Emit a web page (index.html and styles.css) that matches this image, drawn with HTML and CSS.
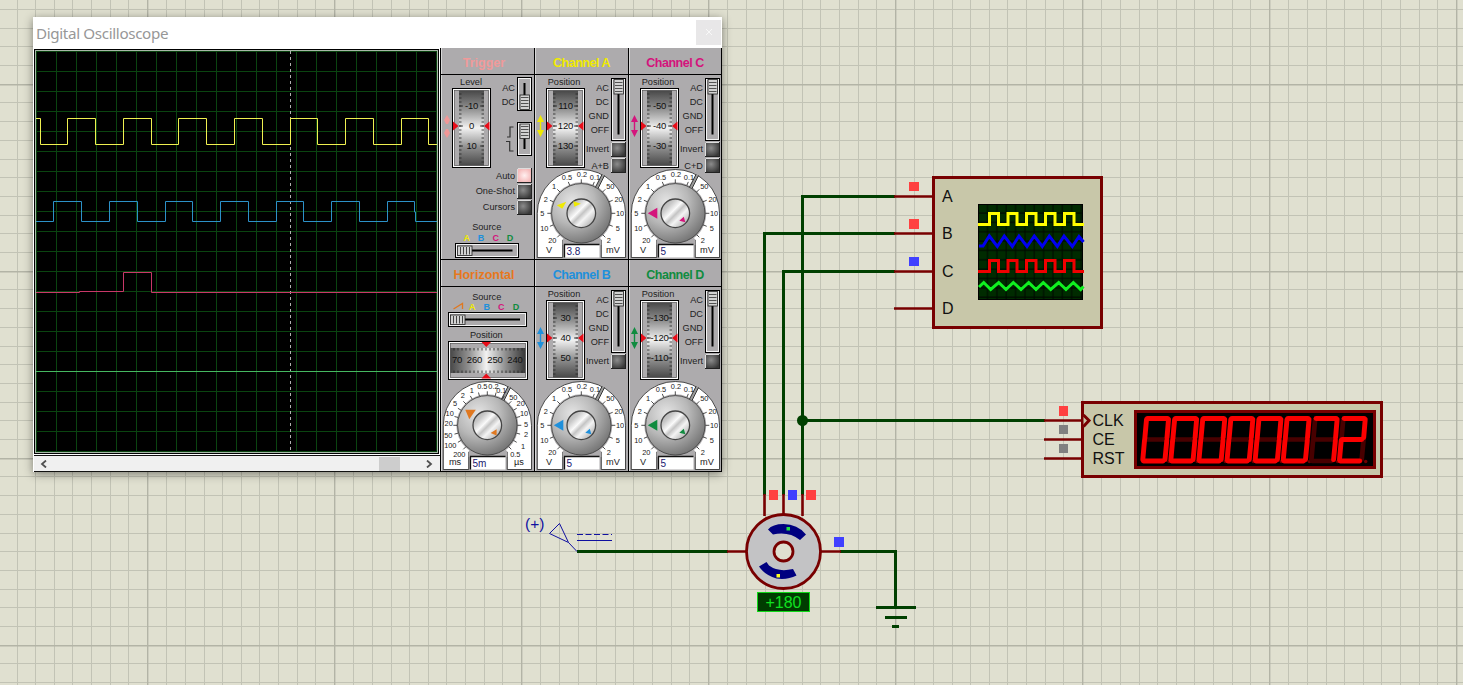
FILE: index.html
```html
<!DOCTYPE html>
<html lang="en">
<head>
<meta charset="utf-8">
<title>Digital Oscilloscope</title>
<link rel="stylesheet" href="styles.css">
</head>
<body>
<main class="workspace">
  <svg class="schematic" viewBox="0 0 1463 685" width="1463" height="685">
    <defs>
      <pattern id="sheet" x="147" y="84" width="187" height="187" patternUnits="userSpaceOnUse">
        <path class="grid-minor" d="M19.5 0V187M38.5 0V187M57.5 0V187M75.5 0V187M94.5 0V187M112.5 0V187M131.5 0V187M150.5 0V187M168.5 0V187M0 18.5H187M0 37.5H187M0 56.5H187M0 75.5H187M0 93.5H187M0 112.5H187M0 131.5H187M0 149.5H187M0 168.5H187"/>
        <path class="grid-major" d="M.6 0V187M0 .6H187"/>
      </pattern>
      <pattern id="mini" x="979" y="204.500" width="9.35" height="9.35" patternUnits="userSpaceOnUse">
        <rect width="9.35" height="9.35" fill="#002b00"/><path d="M8.500 0V9.35M0 8.500H9.35" stroke="#000800"/>
      </pattern>
    </defs>
    <rect width="1463" height="685" fill="url(#sheet)"/>

    <g class="wire">
      <path d="M895 196.500H802.500V495"/><path d="M895 233.500H764.500V495"/><path d="M895 271.500H783.500V495"/>
      <path d="M802 420.500H1045"/><path d="M577 551.500H728"/><path d="M840 551.500H895.500V607"/>
      <path d="M876 607.500H916M885 617.500H907M892 626.500H899"/>
    </g>
    <circle cx="802.500" cy="420.500" r="5.500" fill="#004000"/>

    <g class="pin">
      <path d="M894 196.500H933M894 233.500H933M894 271.500H933M894 308.500H933"/>
      <path d="M1044 420.500H1082M1044 439.500H1082M1044 458.500H1082"/>
      <path d="M764.500 494V516M783.500 494V514M802.500 494V516M727 551.500H746M821 551.500H841"/>
    </g>

    <g class="part">
      <rect x="933.500" y="177.500" width="168" height="150"/>
      <rect x="1082.500" y="402.500" width="299" height="74"/>
      <path d="M1083.500 415L1089 420.500L1083.500 426.500" stroke-width="2"/>
    </g>
    <g class="pin-label">
      <text x="942" y="202">A</text><text x="942" y="239">B</text><text x="942" y="277">C</text><text x="942" y="314">D</text>
      <text x="1092.500" y="426">CLK</text><text x="1092.500" y="445">CE</text><text x="1092.500" y="464">RST</text>
    </g>

    <rect x="978.500" y="204.500" width="104" height="95" fill="url(#mini)" stroke="#000"/>
    <g class="trace-icon">
      <path stroke="#ffff00" d="M978 224.500H989.500V213.500H998.500V224.500H1008V213.500H1017V224.500H1026.500V213.500H1036V224.500H1045.500V213.500H1055V224.500H1064.500V213.500H1074V224.500H1084"/>
      <path stroke="#0000f0" d="M979 246H983L989.300 236L997.300 246.500L1004.300 236L1012.300 246.500L1019 236L1027 246.500L1034.300 236L1042.300 246.500L1049.300 236L1057.300 246.500L1064 236L1072.300 246.500L1079 236.500L1083.500 242"/>
      <path stroke="#f00000" d="M978 271.500H989.500V260.500H998.500V271.500H1008V260.500H1017V271.500H1026.500V260.500H1036V271.500H1045.500V260.500H1055V271.500H1064.500V260.500H1074V271.500H1084"/>
      <path stroke="#10f020" stroke-width="2.500" d="M979 287L983.700 282.500L990.700 289.500L998.700 282.500L1006 289.500L1013.300 282.500L1021 289.500L1028.700 282.500L1036 289.500L1043.300 282.500L1050.700 289.500L1058.700 282.500L1066 289.500L1073.300 282.500L1080.700 289.500L1083.500 286.500"/>
    </g>

    <rect x="1135.500" y="411.500" width="239" height="56" fill="#000" stroke="#780000" stroke-width="3"/>
    <g id="digits"></g>

    <g fill="#ff4040">
      <rect x="909" y="182" width="10" height="9"/><rect x="909" y="219" width="10" height="10"/>
      <rect x="1059" y="406" width="9" height="10"/><rect x="769" y="490" width="9" height="10"/><rect x="806" y="490" width="10" height="10"/>
    </g>
    <g fill="#4040ff">
      <rect x="909" y="257" width="10" height="9"/><rect x="788" y="490" width="9" height="10"/><rect x="834" y="537" width="10" height="10"/>
    </g>
    <g fill="#808080"><rect x="1059" y="425" width="9" height="9"/><rect x="1059" y="444" width="9" height="9"/></g>

    <g transform="translate(783.500 551.500)">
      <circle r="37" fill="#c3c3c5" stroke="#780000" stroke-width="2.800"/>
      <circle r="9.500" fill="#e0e0d0" stroke="#780000" stroke-width="2.800"/>
      <path class="magnet" d="M-15.500-22Q-11-27.500 0-27.500Q14-27.500 22.500-17L16.500-11.500Q5-20.500-10.500-17Z"/>
      <path class="magnet" d="M-24.500 15L-17 10.500L-14.500 14Q-5 21 9.500 17.500L13 24Q4 28.500-7 27Q-19 23.500-24.500 15Z"/>
      <rect x="3" y="-24.500" width="3.500" height="3.500" fill="#20e040"/><rect x="-7" y="22.500" width="3.500" height="3.500" fill="#ffff20"/>
    </g>
    <rect x="757.500" y="592.500" width="52" height="19" fill="#003c00" stroke="#10d818"/>
    <text class="angle" x="783.500" y="608" text-anchor="middle">+180</text>

    <g class="probe">
      <path d="M559.500 523.500L549.500 533.500L568.500 542.500ZM568.500 542.500L577 551.500M577 540.500H612"/>
      <path d="M577 534.500H612" stroke-dasharray="6 2.500"/>
      <text x="525" y="529">(+)</text>
    </g>
  </svg>

  <section class="window">
    <header class="titlebar"><h1>Digital Oscilloscope</h1><button class="close" aria-label="Close"><svg width="8" height="8"><path d="M1 1L7 7M7 1L1 7" stroke="#f8f8f8"/></svg></button></header>
    <div class="window-body">
      <div class="display">
        <svg class="screen" viewBox="34 48 406 407" width="406" height="407">
          <defs><pattern id="div" x="36" y="51" width="20" height="20" patternUnits="userSpaceOnUse"><path d="M.5 0V20M0 .5H20" stroke="#0a4410"/></pattern></defs>
          <rect x="34" y="48" width="406" height="407" fill="#fff"/>
          <rect x="34" y="49" width="405" height="405" fill="#000"/>
          <rect x="35.500" y="50.500" width="402" height="402" fill="#000" stroke="#a9b8a9"/>
          <rect x="36" y="51" width="401" height="401" fill="url(#div)"/>
          <path d="M290.500 51V452" stroke="#b0b0b0" stroke-dasharray="3 3"/>
          <g fill="none">
            <path stroke="#f0f050" d="M36 118.500H40.500V144.500H67.500V118.500H95.500V144.500H123.500V118.500H151.500V144.500H178.500V118.500H206.500V144.500H234.500V118.500H262.500V144.500H290.500V118.500H317.500V144.500H345.500V118.500H373.500V144.500H401.500V118.500H428.500V144.500H437"/>
            <path stroke="#2c91c8" d="M36 221.500H53.500V201.500H81.500V221.500H109.500V201.500H137.500V221.500H165.500V201.500H192.500V221.500H220.500V201.500H248.500V221.500H276.500V201.500H303.500V221.500H331.500V201.500H359.500V221.500H387.500V201.500H414.500V212H415.500V221.500H437"/>
            <path stroke="#c83868" d="M36 292.500H79.500V291.500H123.500V272.500H151.500V292.500H437"/>
            <path stroke="#45b860" d="M36 371.500H437"/>
          </g>
        </svg>
        <div class="scrollbar">
          <svg width="8" height="8" viewBox="0 0 8 8"><path d="M6 .5L2 4L6 7.500"/></svg>
          <span class="thumb"></span>
          <svg width="8" height="8" viewBox="0 0 8 8"><path d="M2 .5L6 4L2 7.500"/></svg>
        </div>
      </div>
      <div class="panels" id="panels"></div>
    </div>
  </section>
</main>
<script src="panels.js"></script>
</body>
</html>
```

FILE: styles.css
```css
* { box-sizing: border-box; }
body { margin: 0; font-family: "Liberation Sans", Arial, sans-serif; background: #e0e0d0; overflow: hidden; }
.workspace { position: relative; width: 1463px; height: 685px; background: #e0e0d0; }
.schematic { display: block; }
.grid-minor { stroke: #c2c3b5; stroke-width: 1; fill: none; }
.grid-major { stroke: #b3b4a6; stroke-width: 1.6; fill: none; }
.wire path { stroke: #004000; stroke-width: 3; fill: none; }
.pin path { stroke: #780000; stroke-width: 2.6; }
.part * { fill: #c8c7a9; stroke: #780000; stroke-width: 3; }
.pin-label text { font-size: 16px; fill: #111; }
.trace-icon path { fill: none; stroke-width: 3; }
.magnet { fill: #000080; }
.angle { font-size: 16px; fill: #10e020; }
.probe path { fill: none; stroke: #1010a0; }
.probe text { font-size: 15.500px; fill: #1010a0; }
.seg { stroke: #fb0000; stroke-width: 4.900; stroke-linecap: round; }
.seg-off { stroke: #480000; stroke-width: 4.700; stroke-linecap: round; }

.window { position: absolute; left: 33px; top: 17px; width: 689px; height: 455px; background: #fff; box-shadow: 0 2px 9px rgba(0, 0, 0, .45); display: flex; flex-direction: column; }
.titlebar { height: 31px; flex: none; display: flex; align-items: center; justify-content: space-between; padding: 0 1px 2px 3px; }
.titlebar h1 { margin: 0; padding-top: 2px; font: 400 15.200px "Noto Sans", "Open Sans", sans-serif; letter-spacing: -.35px; color: #979797; white-space: nowrap; }
.close { width: 25px; height: 25px; margin-top: 1px; border: 0; padding: 0; background: #e8e7e8; display: grid; place-items: center; }
.window-body { display: flex; flex: 1; padding-left: 1px; }
.display { width: 406px; display: flex; flex-direction: column; }
.screen { display: block; }
.scrollbar { height: 17px; background: #f0f0f0; border-top: 1px solid #111; border-bottom: 1px solid #111; display: flex; align-items: center; padding: 0 7px 0 6px; }
.scrollbar path { fill: none; stroke: #505050; stroke-width: 1.8; }
.thumb { width: 21px; height: 14px; background: #cdcdcd; margin-left: auto; margin-right: 25px; }
.panels { display: grid; grid-template-columns: 94px 94px 94px; grid-template-rows: 212px 212px; }
.panel { background: #adabad; border-left: 1px solid #000; border-bottom: 1px solid #000; box-shadow: inset 1px 0 #d8d8d8; display: flex; flex-direction: column; }
.panel:nth-child(3n) { border-right: 1px solid #000; }
.panel h2 { height: 27px; flex: none; margin: 0; border-bottom: 1px solid #000; font-size: 12.500px; line-height: 30px; letter-spacing: -.5px; text-align: center; white-space: nowrap; }
.panel:nth-child(3n + 1) h2 { padding-right: 7px; letter-spacing: 0; }
.panel > svg { display: block; margin-left: -1px; }
.label { font-size: 9.200px; fill: #222; }
.scale { font-size: 7.400px; fill: #222; }
.value { font-size: 9.500px; fill: #111; letter-spacing: -.2px; }
.letter { font-size: 9px; font-weight: 700; }
.lcd { font-size: 10px; fill: #202070; }
```

FILE: panels.js
```javascript
const INK = { A: '#f0ea00', B: '#1e90dc', C: '#d4147c', D: '#108c40' };
const txt = (x, y, s, cls = 'label', anchor = 'end', extra = '') =>
  `<text class="${cls}" x="${x}" y="${y}" text-anchor="${anchor}" ${extra}>${s}</text>`;
const box = (x, y, w, h) => {
  const l = Math.floor(x) + .5, t = Math.floor(y) + .5, r = Math.round(w) - 1, b = Math.round(h) - 1;
  return `<rect x="${l}" y="${t}" width="${r}" height="${b}" fill="#adabad" stroke="#000"/>` +
    `<rect x="${l + 1}" y="${t + 1}" width="${r - 2}" height="${b - 2}" fill="none" stroke="#f4f4f4"/>`;
};
const gauge = (x, y, w, h) =>
  `<rect x="${x + .5}" y="${y + .5}" width="${w}" height="${h}" fill="#adabad" stroke="#000"/>` +
  `<rect x="${x + 1.5}" y="${y + 1.5}" width="${w - 2}" height="${h - 2}" fill="none" stroke="#fff"/>` +
  `<rect x="${x + 2.5}" y="${y + 2.5}" width="${w - 4}" height="${h - 4}" fill="none" stroke="#444" stroke-width=".5"/>`;
const button = (y, fill = 'url(#btn)') =>
  `<rect x="77.500" y="${y + .5}" width="14" height="14" fill="${fill}" stroke="#222"/>` +
  `<path d="M77.500 ${y + 14}V${y + .5}H91" fill="none" stroke="#ddd"/>`;

function knobV(y) {
  let s = `<rect x="80" y="${y}" width="9.500" height="14.500" fill="#d2d2d2" stroke="#222" stroke-width=".8"/>`;
  for (let i = 2.5; i < 14; i += 3) s += `<path d="M81 ${Math.floor(y + i) + .5}H88.500" stroke="#444" stroke-width=".9"/>`;
  return s;
}
function knobH(x, y) {
  let s = `<rect x="${x}" y="${y}" width="14.500" height="9.500" fill="#d2d2d2" stroke="#222" stroke-width=".8"/>`;
  for (let i = 3; i < 13; i += 3) s += `<path d="M${x + i} ${y + 1}V${y + 8.5}" stroke="#333" stroke-width=".9"/>`;
  return s;
}
function barrel(values) {
  let s = gauge(12, 40, 38, 79) + '<rect x="19" y="42.500" width="25" height="75" fill="url(#drum)"/>';
  for (let y = 46; y < 116; y += 4) s += `<path d="M19 ${y}h2.500M44 ${y}h-2.500" stroke="#222" stroke-width=".8"/>`;
  values.forEach((v, i) => {
    const y = 58 + i * 20;
    s += `<path d="M19 ${y}h4M44 ${y}h-4" stroke="#222" stroke-width=".8"/>` + txt(31.500, y + 3.400, v, 'value', 'middle');
  });
  return s + '<path d="M13 73.500L18.500 78L13 82.500ZM49.500 73.500L44 78L49.500 82.500Z" fill="#e80c18"/>';
}
const arrows = c => `<path d="M6.500 67L10 74H7.200V82H10L6.500 89L3 82H5.800V74H3Z" fill="${c}"/>`;

function dial(labels, units, lcd, pointer, inner, color, step) {
  const cx = 47.3, cy = 165.3;
  let s = `<path d="M3.300 209.500V165.300A44 43.700 0 0 1 91.500 165.300V209.500H67.300V192H28.700V209.500Z" fill="#fff" stroke="#222" stroke-width=".8"/>`;
  s += `<circle cx="${cx}" cy="${cy}" r="31" fill="#adabad"/>`;
  s += '<path d="M28.700 192L32 185H63L67.300 192V197H28.700Z" fill="#adabad"/>';
  s += '<path d="M68 126.500L70.500 127.500L63.500 141L61 140Z" fill="#999"/><path d="M68 126.500L61 140M70.500 127.500L63.500 141.500" stroke="#222" stroke-width=".9"/>';
  for (let i = 0; i < step; i++) {
    const a = (-225 + i * 270 / (step - 1)) * Math.PI / 180, c = Math.cos(a), n = Math.sin(a);
    s += `<path d="M${(cx + 30 * c).toFixed(1)} ${(cy + 30 * n).toFixed(1)}L${(cx + 34 * c).toFixed(1)} ${(cy + 34 * n).toFixed(1)}" stroke="#222" stroke-width=".8"/>`;
  }
  labels.forEach(([x, y, t]) => { s += txt(x, y + 2.7, t, 'scale', 'middle'); });
  s += txt(15, 205, units[0], 'label', 'middle') + txt(79, 205, units[1], 'label', 'middle');
  s += `<circle cx="${cx}" cy="${cy}" r="29.700" fill="url(#knob)" stroke="#444" stroke-width=".9"/>`;
  s += `<circle cx="${cx}" cy="${cy}" r="14.300" fill="url(#cap)" stroke="#444" stroke-width="1.300"/>`;
  s += `<g transform="translate(${cx} ${cy})" fill="${color}"><path d="${pointer}"/><path d="${inner}"/></g>`;
  s += '<rect x="30.500" y="196.500" width="35" height="13" fill="#fff"/><path d="M30.500 209.500V196.500H65.500" fill="none" stroke="#111" stroke-width="1.300"/>';
  return s + txt(32.500, 206.500, lcd, 'lcd', 'start');
}

const VOLT = [[33, 129.3, '0.5'], [48, 126.3, '0.2'], [61, 129, '0.1'], [76.3, 138.3, '50'], [84.5, 151.3, '20'],
  [86, 165.3, '10'], [83.7, 180.3, '5'], [74.7, 192.3, '2'], [20, 138.3, '1'], [11.7, 151.3, '2'],
  [8.3, 165.3, '5'], [10.3, 180.3, '10'], [18.3, 192.3, '20']];
const TIME = [[31.7, 130, '1'], [42.3, 126, '0.5'], [53.5, 126, '0.2'], [61.3, 130.3, '0.1'], [73.3, 137.7, '50'],
  [80.7, 143.7, '20'], [84, 153.3, '10'], [86, 164, '5'], [86, 174.7, '2'], [83, 186.7, '1'], [75.3, 194.7, '0.5'],
  [22.7, 135.7, '2'], [15, 143.3, '5'], [9.7, 153.3, '10'], [8.7, 163.7, '20'], [8.3, 175.3, '50'],
  [10.3, 185.7, '100'], [19.3, 194.3, '200']];

const letters = (xs, y) => ['A', 'B', 'C', 'D'].map((l, i) => txt(xs[i], y, l, 'letter', 'middle', `fill="${INK[l]}"`)).join('');
const POINT = 'M-27.500 0L-18-5.500V5.500Z', INNER = 'M4 7.500L8.500 3.500L10 9Z';

function channel(id, values, lcd, extra, pointer = POINT, inner = INNER) {
  let s = txt(30, 37, 'Position', 'label', 'middle') + barrel(values) + arrows(INK[id]);
  ['AC', 'DC', 'GND', 'OFF'].forEach((t, i) => { s += txt(75, 43 + i * 14, t); });
  s += box(77, 30, 15, 63) + '<path d="M84.500 46V86.500" stroke="#000" stroke-width="2"/>' + knobV(31.5);
  s += txt(75, 104, 'Invert') + button(94);
  if (extra) s += txt(75, 121, extra) + button(110);
  return s + dial(VOLT, ['V', 'mV'], lcd, pointer, inner, INK[id], 13);
}
function trigger() {
  let s = txt(31, 37, 'Level', 'label', 'middle') + barrel(['-10', '0', '10']);
  s += '<path d="M7 67L10 72L8 76H6L4 72ZM7 90L10 85L8 81H6L4 85Z" fill="#f09898"/>';
  s += txt(75, 43, 'AC') + txt(75, 57, 'DC');
  s += box(77, 29, 15, 34) + '<path d="M84.500 35V47" stroke="#000" stroke-width="2"/>' + knobV(47);
  s += box(77, 74, 15, 34) + '<path d="M84.500 90V101" stroke="#000" stroke-width="2"/>' + knobV(76);
  s += '<path d="M67 89H70V79H73.500M66 93.500H69.700V103H73.500" stroke="#333" fill="none" stroke-width="1.200"/>';
  s += txt(75, 131.300, 'Auto') + button(120, 'url(#lit)') + txt(75, 146, 'One-Shot') + button(136) + txt(75, 162, 'Cursors') + button(152);
  s += txt(46.700, 182, 'Source', 'label', 'middle') + letters([26.7, 41, 55.7, 70], 193);
  return s + box(15, 195, 64, 15) + '<path d="M32 202.500H72.500" stroke="#000" stroke-width="2"/>' + knobH(17.5, 198);
}
function horizontal() {
  let s = txt(46.700, 40, 'Source', 'label', 'middle') + '<path d="M13.500 49L22.500 43.500V49" fill="none" stroke="#e07820" stroke-width="1.300"/>' + letters([32.3, 46.7, 61.3, 76], 49.500);
  s += box(8, 52, 79, 15) + '<path d="M25 59.500H80" stroke="#000" stroke-width="2"/>' + knobH(10.5, 55);
  s += txt(46.300, 78, 'Position', 'label', 'middle') + gauge(8, 81, 79, 38) + '<rect x="10.300" y="88" width="75" height="25" fill="url(#drumH)"/>';
  for (let x = 14; x < 84; x += 4) s += `<path d="M${x} 88v2.500M${x} 113v-2.500" stroke="#222" stroke-width=".8"/>`;
  [[17, '70'], [34.500, '260'], [55, '250'], [75, '240']].forEach(([x, t]) => { s += txt(x, 103, t, 'value', 'middle'); });
  s += '<path d="M41.500 82H51L46.300 87ZM41.500 118.500H51L46.300 113.500Z" fill="#e80c18"/>';
  return s + dial(TIME, ['ms', 'µs'], '5m', 'M-22-15.500H-11.500L-18-6Z', 'M3.300 7.700L9.300 4V10.300Z', '#e07820', 19);
}

const defs = `<defs>
<linearGradient id="drum" x2="0" y2="1"><stop stop-color="#484848"/><stop offset=".25" stop-color="#929292"/><stop offset=".5" stop-color="#f2f2f2"/><stop offset=".75" stop-color="#929292"/><stop offset="1" stop-color="#484848"/></linearGradient>
<linearGradient id="drumH"><stop stop-color="#484848"/><stop offset=".25" stop-color="#929292"/><stop offset=".48" stop-color="#f2f2f2"/><stop offset=".75" stop-color="#8a8a8a"/><stop offset="1" stop-color="#383838"/></linearGradient>
<radialGradient id="knob" cx=".35" cy=".3" r=".75"><stop stop-color="#e4e4e4"/><stop offset=".5" stop-color="#b8b8b8"/><stop offset="1" stop-color="#747474"/></radialGradient>
<linearGradient id="cap" y2="1"><stop stop-color="#a8a8a8"/><stop offset=".25" stop-color="#c8c8c8"/><stop offset=".42" stop-color="#fafafa"/><stop offset=".52" stop-color="#c4c4c4"/><stop offset=".64" stop-color="#f4f4f4"/><stop offset="1" stop-color="#909090"/></linearGradient>
<radialGradient id="btn" cx=".4" cy=".4" r=".65"><stop stop-color="#8c8c8c"/><stop offset="1" stop-color="#383838"/></radialGradient>
<radialGradient id="lit"><stop stop-color="#fff0f0"/><stop offset="1" stop-color="#f6bcbc"/></radialGradient></defs>`;

const panels = [
  ['Trigger', '#f09a9a', trigger()],
  ['Channel A', INK.A, channel('A', ['110', '120', '130'], '3.8', 'A+B', 'M-24.500-8L-15-11.500L-19-4.500Z', 'M-8-12L-.5-9.500L-7-6.500Z')],
  ['Channel C', INK.C, channel('C', ['-50', '-40', '-30'], '5', 'C+D')],
  ['Horizontal', '#e8781c', horizontal()],
  ['Channel B', INK.B, channel('B', ['30', '40', '50'], '5')],
  ['Channel D', INK.D, channel('D', ['-130', '-120', '-110'], '5')]
];
document.getElementById('panels').innerHTML = panels.map(([title, color, body], i) =>
  `<article class="panel"><h2 style="color:${color}">${title}</h2><svg width="94" height="184" viewBox="0 27 94 184">${i ? '' : defs}${body}</svg></article>`).join('');

/* Segments a-g of a slanted seven-segment digit */
const SEG = { a: 'M5 0H25', b: 'M26 1L24.500 19', c: 'M24.300 22L22.500 41', d: 'M1 42.500H20.500', e: 'M2 22L.3 41', f: 'M4 1L2.300 20', g: 'M3 21H22.500' };
const ON = { 0: 'abcdef', 7: 'abc', 2: 'abged' };
document.getElementById('digits').innerHTML = [...'00000072'].map((d, i) => {
  const order = [...'abcdefg'].sort((p, q) => ON[d].includes(p) - ON[d].includes(q));
  return `<g transform="translate(${1142.5 + i * 28.1} 418.500)"><circle cx="26.500" cy="43" r="1.700" fill="#700000"/>` +
    order.map(k => `<path class="${ON[d].includes(k) ? 'seg' : 'seg-off'}" d="${SEG[k]}"/>`).join('') + '</g>';
}).join('');
```
